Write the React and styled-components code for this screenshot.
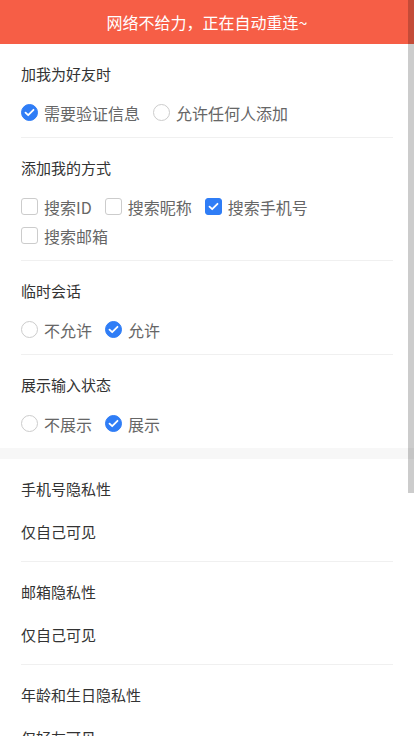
import React from 'react';
import styled, { createGlobalStyle } from 'styled-components';

const GlobalStyle = createGlobalStyle`
  html, body {
    margin: 0;
    padding: 0;
    background: #fff;
  }
  body {
    font-family: "Noto Sans CJK SC", "Noto Sans", sans-serif;
    overflow: hidden;
  }
`;

// ======================
// STYLED COMPONENTS
// ======================
const Page = styled.div`
  width: 414px;
  min-height: 736px;
  background: #f7f7f7;
`;

const Banner = styled.div`
  height: 44px;
  background: #f65e46;
  color: #fff;
  font-size: 16px;
  display: flex;
  align-items: center;
  justify-content: center;
`;

const Group = styled.div`
  background: #fff;
  margin-bottom: ${p => p.gap || 0}px;
`;

const Section = styled.div`
  margin: 0 21px;
  padding: 18px 0 10px;
  border-bottom: ${p => (p.last ? 'none' : '1px solid #f0f0f0')};
`;

const Title = styled.div`
  font-size: 15px;
  line-height: 24px;
  color: #333;
  margin-bottom: ${p => (p.flush ? 0 : 12)}px;
`;

const Options = styled.div`
  display: flex;
  flex-wrap: wrap;
`;

const Option = styled.label`
  display: flex;
  align-items: center;
  height: 29px;
  margin-right: 13px;
  font-size: 16px;
  color: #666;
`;

const Mark = styled.span`
  width: 17px;
  height: 17px;
  box-sizing: border-box;
  margin-right: 6px;
  border-radius: ${p => (p.round ? '50%' : '3px')};
  border: 1px solid ${p => (p.checked ? '#2f7df6' : '#cccccc')};
  background: ${p => (p.checked ? '#2f7df6' : '#fff')};
  display: flex;
  align-items: center;
  justify-content: center;
  flex-shrink: 0;
`;

const Item = styled.div`
  margin: 0 21px;
  padding: 18px 0 17px;
  border-bottom: 1px solid #f0f0f0;
`;

const ItemValue = styled.div`
  margin-top: 19px;
  font-size: 15px;
  line-height: 24px;
  color: #333;
`;

const ScrollThumb = styled.div`
  position: fixed;
  top: 0;
  right: 0;
  width: 6px;
  height: 493px;
  background: rgba(0, 0, 0, 0.2);
  z-index: 10;
`;

// ======================
// COMPONENT
// ======================
const Check = () => (
  <svg width="11" height="9" viewBox="0 0 11 9">
    <path d="M1.5 4.6 L4.2 7.2 L9.5 1.8" fill="none" stroke="#fff" strokeWidth="1.8" strokeLinecap="round" strokeLinejoin="round" />
  </svg>
);

const Choice = ({ round, checked, children }) => (
  <Option>
    <Mark round={round} checked={checked}>{checked && <Check />}</Mark>
    {children}
  </Option>
);

const settings = [
  {
    title: '加我为好友时',
    round: true,
    options: [
      ['需要验证信息', true],
      ['允许任何人添加', false],
    ],
  },
  {
    title: '添加我的方式',
    round: false,
    options: [
      ['搜索ID', false],
      ['搜索昵称', false],
      ['搜索手机号', true],
      ['搜索邮箱', false],
    ],
  },
  {
    title: '临时会话',
    round: true,
    options: [
      ['不允许', false],
      ['允许', true],
    ],
  },
  {
    title: '展示输入状态',
    round: true,
    options: [
      ['不展示', false],
      ['展示', true],
    ],
  },
];

const privacy = [
  ['手机号隐私性', '仅自己可见'],
  ['邮箱隐私性', '仅自己可见'],
  ['年龄和生日隐私性', '仅好友可见'],
];

const App = () => (
  <Page>
    <GlobalStyle />
    <Banner>网络不给力，正在自动重连~</Banner>
    <Group gap={11}>
      {settings.map((s, i) => (
        <Section key={s.title} last={i === settings.length - 1}>
          <Title>{s.title}</Title>
          <Options>
            {s.options.map(([label, on]) => (
              <Choice key={label} round={s.round} checked={on}>{label}</Choice>
            ))}
          </Options>
        </Section>
      ))}
    </Group>
    <Group>
      {privacy.map(([title, value]) => (
        <Item key={title}>
          <Title flush>{title}</Title>
          <ItemValue>{value}</ItemValue>
        </Item>
      ))}
    </Group>
    <ScrollThumb />
  </Page>
);

export default App;
